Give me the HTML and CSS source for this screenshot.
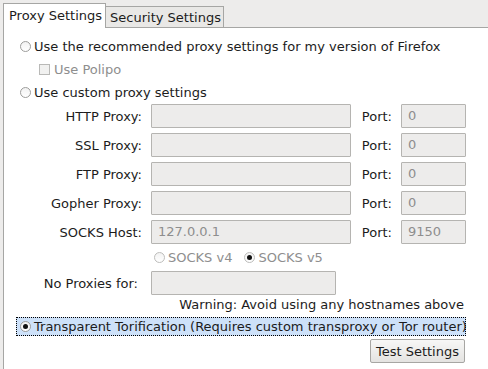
FILE: index.html
```html
<!DOCTYPE html>
<html>
<head>
<meta charset="utf-8">
<link rel="stylesheet" href="styles.css">
</head>
<body>
<div class="window">
  <div class="tabs">
    <div class="tab active">Proxy Settings</div>
    <div class="tab">Security Settings</div>
  </div>
  <div class="panel">
    <div class="opt"><span class="radio"></span><span>Use the recommended proxy settings for my version of Firefox</span></div>
    <div class="opt sub disabled"><span class="check"></span><span>Use Polipo</span></div>
    <div class="opt"><span class="radio"></span><span>Use custom proxy settings</span></div>
    <div class="grid">
      <label class="lbl">HTTP Proxy:</label><div class="field"></div><label class="lbl">Port:</label><div class="field">0</div>
      <label class="lbl">SSL Proxy:</label><div class="field"></div><label class="lbl">Port:</label><div class="field">0</div>
      <label class="lbl">FTP Proxy:</label><div class="field"></div><label class="lbl">Port:</label><div class="field">0</div>
      <label class="lbl">Gopher Proxy:</label><div class="field"></div><label class="lbl">Port:</label><div class="field">0</div>
      <label class="lbl">SOCKS Host:</label><div class="field">127.0.0.1</div><label class="lbl">Port:</label><div class="field">9150</div>
    </div>
    <div class="socks disabled">
      <div class="opt"><span class="radio"></span><span>SOCKS v4</span></div>
      <div class="opt"><span class="radio on"></span><span>SOCKS v5</span></div>
    </div>
    <div class="noproxy">
      <label class="lbl np">No Proxies for:</label><div class="field wide"></div>
    </div>
    <div class="warning">Warning: Avoid using any hostnames above</div>
    <div class="opt focus"><span class="radio on"></span><span>Transparent Torification (Requires custom transproxy or Tor router)</span></div>
    <div class="actions"><button class="btn">Test Settings</button></div>
  </div>
</div>
</body>
</html>
```
FILE: styles.css
```css
html, body {
  margin: 0;
  padding: 0;
}
body {
  background: #edeceb;
  font-family: "DejaVu Sans", sans-serif;
  font-size: 13px;
  color: #1c1c1c;
  width: 488px;
  height: 369px;
  overflow: hidden;
}
.window {
  padding-left: 3px;
}
.tabs {
  display: flex;
  align-items: flex-end;
  height: 27px;
  box-sizing: border-box;
}
.tab {
  box-sizing: border-box;
  border: 1px solid #a6a6a4;
  border-bottom: none;
  display: flex;
  align-items: center;
  white-space: nowrap;
}
.tab.active {
  background: #fff;
  height: 25px;
  margin-bottom: -1px;
  padding: 0 3px 2px 5px;
  position: relative;
  z-index: 1;
}
.tab:not(.active) {
  background: #e9e8e6;
  height: 21px;
  padding: 0 2px 0 4px;
  border-left: none;
}
.panel {
  box-sizing: border-box;
  background: #fff;
  border-top: 1px solid #a6a6a4;
  border-left: 1px solid #a6a6a4;
  padding: 7px 22px 0 12px;
  height: 342px;
}
.opt {
  display: flex;
  align-items: center;
  height: 23px;
  box-sizing: border-box;
  border: 1px solid transparent;
  padding: 0 3px;
  white-space: nowrap;
}
.radio {
  width: 11px;
  height: 11px;
  box-sizing: border-box;
  border: 1px solid #9d9d9b;
  border-radius: 50%;
  background: linear-gradient(#f2f2f2, #ffffff);
  margin-right: 3px;
  position: relative;
  flex: none;
}
.radio.on::after {
  content: "";
  position: absolute;
  left: 2px;
  top: 2px;
  width: 5px;
  height: 5px;
  border-radius: 50%;
  background: #111;
}
.check {
  width: 11px;
  height: 11px;
  box-sizing: border-box;
  border: 1px solid #b9b9b7;
  background: #f1f1f0;
  margin-right: 4px;
  flex: none;
}
.sub {
  margin-left: 19px;
}
.disabled {
  color: #8e8e8e;
}
.disabled .radio {
  border-color: #bdbdbb;
}
.grid {
  display: grid;
  grid-template-columns: 126px 200px 32px 65px;
  grid-auto-rows: 24px;
  column-gap: 9px;
  row-gap: 5px;
}
.lbl {
  text-align: right;
  display: flex;
  align-items: center;
  justify-content: flex-end;
  white-space: nowrap;
}
.field {
  box-sizing: border-box;
  height: 24px;
  border: 1px solid #b5b4b1;
  border-radius: 1px;
  background: #edeceb;
  color: #8e8e8e;
  padding: 0 6px;
  line-height: 22px;
}
.socks {
  display: flex;
  gap: 4px;
  margin-top: 3px;
  padding-left: 134px;
}
.socks .opt {
  height: 20px;
}
.noproxy {
  display: flex;
  margin-top: 4px;
  height: 24px;
}
.np {
  width: 122px;
  margin-right: 13px;
}
.field.wide {
  width: 185px;
}
.warning {
  height: 20px;
  line-height: 20px;
  text-align: right;
  padding-right: 2px;
}
.focus {
  margin-top: 2px;
  height: 19px;
  border: 1px dotted #000;
  background: #cde1f9;
}
.actions {
  display: flex;
  justify-content: flex-end;
  margin-top: 3px;
  padding-right: 1px;
}
.btn {
  font-family: "DejaVu Sans", sans-serif;
  font-size: 13px;
  color: #1c1c1c;
  height: 24px;
  padding: 0 5px;
  border: 1px solid #a7a6a3;
  border-radius: 2px;
  background: linear-gradient(#f7f7f6, #e4e3e1);
}
```
